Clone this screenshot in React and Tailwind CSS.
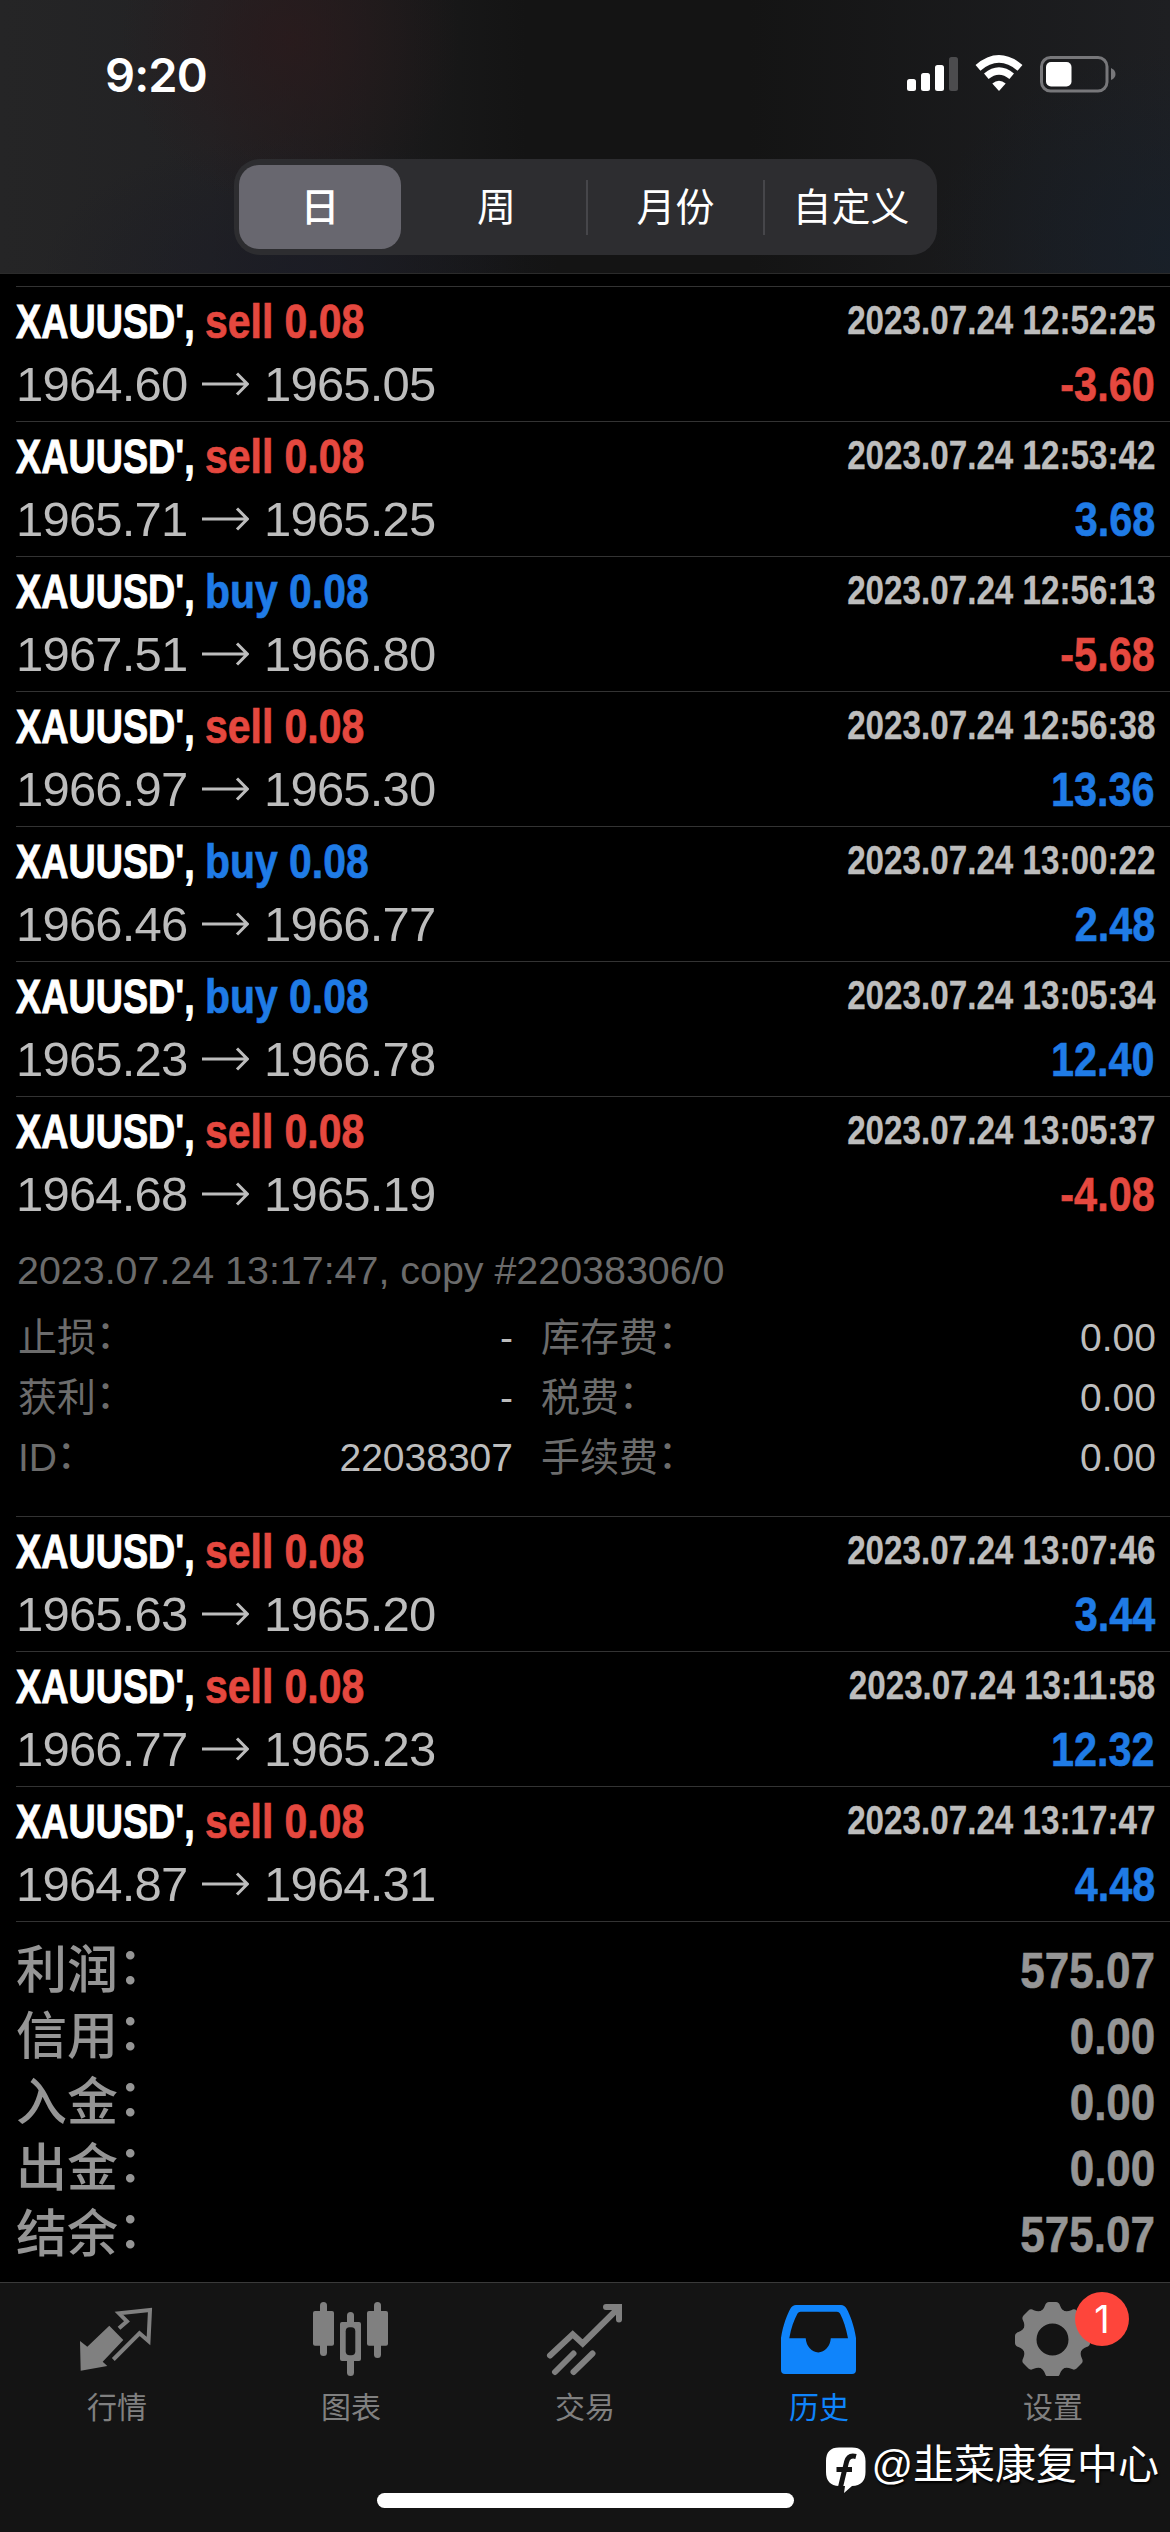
import React from "react";

const BLUE = "text-[#1f7be6]";
const RED = "text-[#e5483f]";

const deals = [
  { side: "sell", open: "1964.60", close: "1965.05", time: "2023.07.24 12:52:25", profit: "-3.60" },
  { side: "sell", open: "1965.71", close: "1965.25", time: "2023.07.24 12:53:42", profit: "3.68" },
  { side: "buy", open: "1967.51", close: "1966.80", time: "2023.07.24 12:56:13", profit: "-5.68" },
  { side: "sell", open: "1966.97", close: "1965.30", time: "2023.07.24 12:56:38", profit: "13.36" },
  { side: "buy", open: "1966.46", close: "1966.77", time: "2023.07.24 13:00:22", profit: "2.48" },
  { side: "buy", open: "1965.23", close: "1966.78", time: "2023.07.24 13:05:34", profit: "12.40" },
  { side: "sell", open: "1964.68", close: "1965.19", time: "2023.07.24 13:05:37", profit: "-4.08", expanded: true },
  { side: "sell", open: "1965.63", close: "1965.20", time: "2023.07.24 13:07:46", profit: "3.44" },
  { side: "sell", open: "1966.77", close: "1965.23", time: "2023.07.24 13:11:58", profit: "12.32" },
  { side: "sell", open: "1964.87", close: "1964.31", time: "2023.07.24 13:17:47", profit: "4.48" },
];

const details = [
  ["止损", "-", "库存费", "0.00"],
  ["获利", "-", "税费", "0.00"],
  ["ID", "22038307", "手续费", "0.00"],
];

const totals = [
  ["利润", "575.07"],
  ["信用", "0.00"],
  ["入金", "0.00"],
  ["出金", "0.00"],
  ["结余", "575.07"],
];

function StatusBar() {
  return (
    <div className="flex h-[148px] items-start justify-between pl-[105px] pr-[54px]">
      <div className="mt-[45px] font-[Inter] text-[47px] font-semibold leading-[60px] tracking-[-0.9px] text-white">9:20</div>
      <svg className="mt-[50px] h-[48px] w-[212px]" viewBox="904 50 212 48">
        <g fill="#fff">
          <rect x="907" y="79" width="9" height="12" rx="2.5" />
          <rect x="921" y="73" width="9" height="18" rx="2.5" />
          <rect x="935" y="65" width="9" height="26" rx="2.5" />
          <rect x="949" y="57" width="9" height="34" rx="2.5" fill="#4c4c4e" />
          <path d="M999 91 L992.3 83.6 Q999 78 1005.7 83.6 Z" strokeLinejoin="round" />
        </g>
        <path d="M978 67.8 Q999 50 1020 67.8" fill="none" stroke="#fff" strokeWidth="7.6" />
        <path d="M986.3 76.2 Q999 65.8 1011.7 76.2" fill="none" stroke="#fff" strokeWidth="7.2" />
        <rect x="1041.5" y="57.5" width="65.5" height="33.5" rx="9" fill="none" stroke="#77777a" strokeWidth="3" />
        <rect x="1046" y="62" width="25.5" height="24.5" rx="5" fill="#fff" />
        <path d="M1111 68 Q1115.5 70 1115.5 74 Q1115.5 78 1111 80 Z" fill="#77777a" />
      </svg>
    </div>
  );
}

function Segments() {
  const base = "flex items-center justify-center";
  return (
    <div className="ml-[234px] mt-[11px] flex h-[96px] w-[703px] items-center rounded-[26px] bg-[#2d2d30] pl-[5px] text-[39px] leading-none text-white">
      <div className={base + " h-[84px] w-[162px] rounded-[20px] bg-[#68676f] font-medium"}>日</div>
      <div className={base + " w-[185px] pl-[6px]"}>周</div>
      <div className="h-[55px] w-[2px] bg-[#46464a]" />
      <div className={base + " w-[175px]"}>月份</div>
      <div className="h-[55px] w-[2px] bg-[#46464a]" />
      <div className={base + " flex-1"}>自定义</div>
    </div>
  );
}

function Arrow() {
  return (
    <svg className="h-[24px] w-[48px]" viewBox="0 0 48 24">
      <path d="M1 12 H46 M36 1.5 L46.3 12 L36 22.5" fill="none" stroke="#bdbdbd" strokeWidth="3" />
    </svg>
  );
}

function Colon() {
  return <span className="inline-block -translate-x-[0.01em] -translate-y-[0.08em]">：</span>;
}

function Details() {
  return (
    <div className="h-[285px] pr-[14px]">
      <div className="h-[77px] pl-[1px] pt-[15px] text-[39.4px] leading-[48px] text-[#6b6b6b]">
        <span className="whitespace-nowrap">2023.07.24 13:17:47, copy #22038306/0</span>
      </div>
      {details.map(([a, b, c, d]) => (
        <div key={a} className="flex h-[60px] items-center text-[39px] leading-[60px] text-[#bdbdbd]">
          <span className="pl-[2px] text-[#6c6c6c]">{a}<Colon /></span>
          <span className="flex-1" />
          <span>{b}</span>
          <span className="ml-[28px] w-[300px] text-[#6c6c6c]">{c}<Colon /></span>
          <span className="w-[315px] text-right">{d}</span>
        </div>
      ))}
    </div>
  );
}

function Deal({ side, open, close, time, profit, expanded }) {
  return (
    <div className="ml-[16px] border-t border-[#333]">
      <div className="h-[134px] pr-[15px] pt-[4px]">
        <div className="flex h-[60px] justify-between text-[49px] font-bold leading-[60px]">
          <div className="flex">
            <div className="w-[189px]">
              <span className="inline-block origin-left scale-x-[0.77] whitespace-nowrap text-white [-webkit-text-stroke:1px_currentColor]">XAUUSD',</span>
            </div>
            <span className={"inline-block origin-left scale-x-[0.835] whitespace-nowrap [-webkit-text-stroke:0.7px_currentColor] " + (side === "buy" ? BLUE : RED)}>
              {side} 0.08
            </span>
          </div>
          <span className="origin-right scale-x-[0.83] text-[40px] leading-[59px] text-[#bdbdbd] [-webkit-text-stroke:0.3px_currentColor]">{time}</span>
        </div>
        <div className="flex h-[66px] items-center justify-between leading-[66px]">
          <div className="flex items-center text-[49px] tracking-[-0.8px] text-[#bdbdbd]">
            <span className="w-[185px] whitespace-nowrap">{open}</span>
            <Arrow />
            <span className="ml-[15px] whitespace-nowrap">{close}</span>
          </div>
          <span className={"origin-right scale-x-[0.845] text-[49px] font-bold [-webkit-text-stroke:0.6px_currentColor] " + (profit[0] === "-" ? RED : BLUE)}>
            {profit}
          </span>
        </div>
      </div>
      {expanded && <Details />}
    </div>
  );
}

function Totals() {
  return (
    <div className="ml-[16px] h-[361px] border-t border-[#333] pr-[15px] pt-[16px] font-bold text-[#959595]">
      {totals.map(([label, value]) => (
        <div key={label} className="flex h-[66px] items-center justify-between leading-[66px]">
          <span className="text-[51px] font-medium">{label}<Colon /></span>
          <span className="origin-right scale-x-[0.88] text-[50px] [-webkit-text-stroke:0.6px_currentColor]">{value}</span>
        </div>
      ))}
    </div>
  );
}

const icons = {
  quotes: (
    <>
      <path d="M7 45 L14.3 50.7 L36.3 29.7 L50.3 44 L29.7 65.7 L34.3 70 L7.7 74.7 Z" fill="currentColor" />
      <path d="M46 32.3 L54 25.3 L46 17.3 L77 14 L75.5 45 L66.5 37.3 L40.3 63.5" fill="none" stroke="currentColor" strokeWidth="4" />
    </>
  ),
  chart: (
    <g fill="currentColor">
      <rect x="6" y="15" width="21" height="34.7" rx="2" />
      <rect x="13" y="6" width="7" height="54" rx="3.5" />
      <rect x="60" y="15" width="21" height="34.7" rx="2" />
      <rect x="67" y="6" width="7" height="56" rx="3.5" />
      <rect x="33" y="26" width="21" height="39" rx="2" />
      <rect x="40" y="16" width="7" height="64" rx="3.5" />
      <rect x="38.7" y="31.3" width="9.6" height="28" rx="4" fill="#141414" />
    </g>
  ),
  trade: (
    <g fill="none" stroke="currentColor" strokeWidth="6" strokeLinecap="round">
      <path d="M9 59.5 L31.7 38.3 L41.7 47.5 L77 12.5" />
      <path d="M65 11 H78 V23.5" />
      <path d="M14 76 L32.5 57.5 M32.5 76 L51.5 57.5" />
    </g>
  ),
  history: (
    <path
      fillRule="evenodd"
      fill="currentColor"
      d="M6 42 C8 29 12 19 15.5 12.5 Q17.5 9 21 9 H66 Q69.5 9 71.5 12.5 C75 19 79 29 81 42 V74 Q81 78 77 78 H10 Q6 78 6 74 Z M14.3 42.3 H30.7 A12.6 15.5 0 0 0 55.8 42.3 H73 C71 32 68.5 24 65 17.5 Q64 15.7 62 15.7 H25.5 Q23.5 15.7 22.5 17.5 C19 24 16 32 14.3 42.3 Z"
    />
  ),
  settings: (
    <g fill="currentColor">
      {[0, 45, 90, 135, 180, 225, 270, 315].map((a) => (
        <path key={a} transform={`rotate(${a} 43.5 43.5)`} d="M30 16 Q34.5 14 36 9.5 Q37 6 40 6 H47 Q50 6 51 9.5 Q52.500 14 57 16 V24 H30 Z" />
      ))}
      <circle cx="43.5" cy="43.5" r="23" fill="none" stroke="currentColor" strokeWidth="14" />
    </g>
  ),
};

const tabs = [
  ["quotes", "行情"],
  ["chart", "图表"],
  ["trade", "交易"],
  ["history", "历史"],
  ["settings", "设置"],
];

function TabBar() {
  return (
    <div className="relative h-[250px] border-t border-[#3a3a3a] bg-[#141414]">
      <div className="grid grid-cols-5 pt-[13px]">
        {tabs.map(([id, label]) => (
          <div key={id} className={"relative flex flex-col items-center " + (id === "history" ? "text-[#0f84fb]" : "text-[#808080]")}>
            <svg className="h-[80px] w-[88px]" viewBox="0 0 88 80">{icons[id]}</svg>
            <span className="mt-[12px] text-[30px] leading-[40px]">{label}</span>
            {id === "settings" && (
              <span className="absolute left-[139px] top-[-4px] flex h-[54px] w-[54px] items-center justify-center rounded-full bg-[#fe453b] font-[Inter] text-[38px] leading-none text-white">
                1
              </span>
            )}
          </div>
        ))}
      </div>
      <div className="absolute left-[377px] top-[210px] h-[15px] w-[417px] rounded-full bg-white" />
      <div className="absolute right-[11px] top-[153px] flex items-center whitespace-nowrap text-[41px] leading-[50px] text-white [text-shadow:1px_2px_2px_#000]">
        <svg className="mr-[4px] mt-[10px] h-[48px] w-[42px]" viewBox="0 0 42 48">
          <path d="M14 1.500 H27 Q40 1.500 40.500 15 V26 Q40.500 39.500 27 40 L19 47 L20 40 H14 Q1 39.500 1 26 V15 Q1 1.500 14 1.500 Z" fill="#fff" />
          <path d="M31 10.500 Q23.500 8.500 21.500 16 L15.500 41 M11.500 23.500 H27" fill="none" stroke="#141414" strokeWidth="5" />
        </svg>
        @韭菜康复中心
      </div>
    </div>
  );
}

export default function App() {
  return (
    <div className="h-[2532px] w-[1170px] overflow-hidden bg-black font-['Liberation_Sans','Noto_Sans_CJK_SC',sans-serif]">
      <header className="h-[274px] border-b border-[#2b2b2b] bg-[radial-gradient(ellipse_170px_170px_at_290px_40px,#2b1a1ccc,transparent),radial-gradient(ellipse_240px_200px_at_1170px_250px,#16202caa,transparent),radial-gradient(ellipse_260px_140px_at_300px_274px,#1b1c26cc,transparent),linear-gradient(90deg,#252526,#222224_18%,#141414_45%,#141414_64%,#1e1f22_100%)]">
        <StatusBar />
        <Segments />
      </header>
      <main className="pt-[12px]">
        {deals.map((d) => (
          <Deal key={d.time} {...d} />
        ))}
        <Totals />
      </main>
      <TabBar />
    </div>
  );
}
